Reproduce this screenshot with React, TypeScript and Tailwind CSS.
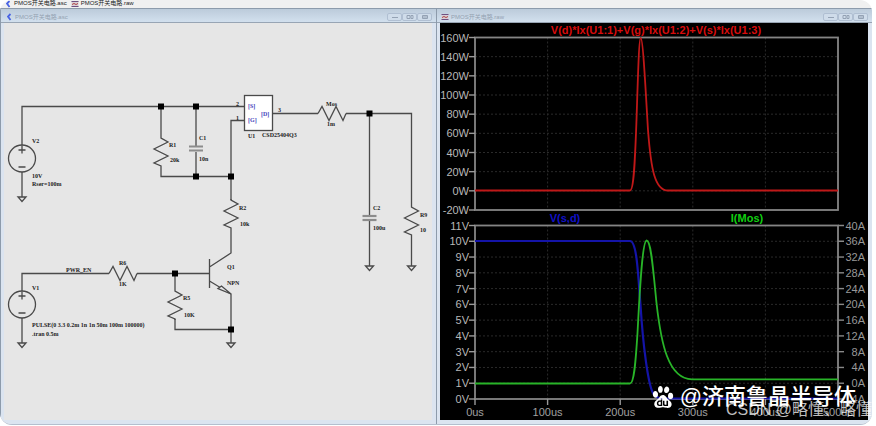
import type { ReactNode } from "react";
import { SiBaidu } from "react-icons/si";

const WIRE = "#4a4a4a";

interface PointProps {
  readonly x: number;
  readonly y: number;
}

function Label({ x, y, children }: PointProps & { readonly children: ReactNode }) {
  return (
    <text x={x} y={y} className="fill-[#222] font-['Liberation_Serif',serif] text-[6px] font-bold">
      {children}
    </text>
  );
}

function Junction({ x, y }: PointProps) {
  return <rect x={x - 3} y={y - 3} width={6} height={6} fill="#000" />;
}

function Ground({ x, y }: PointProps) {
  return <path d={`M${x - 4} ${y}h8l-4 4.5z`} />;
}

function VResistor({ x, y }: PointProps) {
  return <path d={`M${x} ${y}v1l7 4l-14 7l14 7l-14 7l7 3v1`} />;
}

function HResistor({ x, y }: PointProps) {
  return <path d={`M${x} ${y}l4 -7l7 14l7 -14l7 14l3 -7`} />;
}

function Capacitor({ x, y }: PointProps) {
  return (
    <g stroke="#8c8c8c" strokeWidth={2.2}>
      <path d={`M${x - 7} ${y}h14`} />
      <path d={`M${x - 7} ${y + 4}h14`} />
    </g>
  );
}

function Source({ x, y }: PointProps) {
  return (
    <g>
      <circle cx={x} cy={y} r={13.5} />
      <path d={`M${x} ${y - 13}v8M${x - 3.5} ${y - 8.5}h7M${x - 3.5} ${y + 8.5}h7`} />
    </g>
  );
}

function Schematic() {
  return (
    <svg viewBox="4 23 428 397" className="block h-auto w-full bg-[#e6e6e6]" role="img" aria-label="Schematic">
      <g fill="none" stroke={WIRE} strokeWidth={1.3}>
        {/* supply rail */}
        <path d="M22 145V106.5H244M22 172V197" />
        <Source x={22} y={158.5} />
        <Ground x={22} y={197} />
        <path d="M161 106.5V137M161 167V176.5H231M196 106.5V146M196 152V176.5" />
        <VResistor x={161} y={137} />
        <Capacitor x={196} y={146.5} />

        {/* mosfet and load */}
        <rect x={244.5} y={95.5} width={28} height={35} fill="#fff" />
        <path d="M244 120.5H231V200M272.5 113.5H318M346 113.5H411.5V206M411.5 236V266" />
        <HResistor x={318} y={113.5} />
        <path d="M369.5 113.5V216M369.5 221V266" />
        <Capacitor x={369.5} y={216} />
        <VResistor x={411.5} y={206} />
        <Ground x={369.5} y={266} />
        <Ground x={411.5} y={266} />

        {/* gate driver */}
        <VResistor x={231} y={199} />
        <path d="M231 229V253L209.500 267M209.500 259V288M209.500 281L231 294V343" />
        <path d="M218 288.500L221.500 286L231 294z" fill="#e6e6e6" />
        <Ground x={231} y={343} />
        <path d="M22 291V273.500H109M137 273.500H209.500M22 318V343" />
        <Source x={22} y={304.5} />
        <Ground x={22} y={343} />
        <HResistor x={109} y={273.5} />
        <path d="M175 273.500V290M175 319V329.500H231" />
        <VResistor x={175} y={290} />
      </g>

      <Junction x={161} y={106.5} />
      <Junction x={196} y={106.5} />
      <Junction x={196} y={176.5} />
      <Junction x={231} y={176.5} />
      <Junction x={369.5} y={113.5} />
      <Junction x={175} y={273.5} />
      <Junction x={231} y={329.5} />

      <Label x={32} y={143}>V2</Label>
      <Label x={32} y={178}>10V</Label>
      <Label x={32} y={186}>Rser=100m</Label>
      <Label x={169} y={147}>R1</Label>
      <Label x={170} y={162}>20k</Label>
      <Label x={199} y={140}>C1</Label>
      <Label x={199} y={161}>10n</Label>
      <Label x={236} y={106}>2</Label>
      <Label x={236} y={120}>1</Label>
      <Label x={278} y={112}>3</Label>
      <Label x={248} y={138}>U1</Label>
      <Label x={262} y={137}>CSD25404Q3</Label>
      <g className="fill-[#4444bb] font-['Liberation_Serif',serif] text-[6px] font-bold">
        <text x={248} y={108}>[S]</text>
        <text x={248} y={122}>[G]</text>
        <text x={261} y={116}>[D]</text>
      </g>
      <Label x={326} y={106}>Mos</Label>
      <Label x={327} y={126}>1m</Label>
      <Label x={373} y={210}>C2</Label>
      <Label x={373} y={230}>100u</Label>
      <Label x={420} y={217}>R9</Label>
      <Label x={420} y={232}>10</Label>
      <Label x={239} y={210}>R2</Label>
      <Label x={240} y={226}>10k</Label>
      <Label x={227} y={269}>Q1</Label>
      <Label x={227} y={285}>NPN</Label>
      <Label x={66} y={272}>PWR_EN</Label>
      <Label x={119} y={265}>R6</Label>
      <Label x={119} y={286}>1K</Label>
      <Label x={183} y={300}>R5</Label>
      <Label x={184} y={317}>10K</Label>
      <Label x={32} y={290}>V1</Label>
      <Label x={32} y={327}>PULSE(0 3.3 0.2m 1n 1n 50m 100m 100000)</Label>
      <Label x={32} y={336}>.tran 0.5m</Label>
    </svg>
  );
}

const LEFT = 475;
const RIGHT = 838;
const X_TICKS = ["0us", "100us", "200us", "300us", "400us", "500us"];
const POWER_TICKS = ["160W", "140W", "120W", "100W", "80W", "60W", "40W", "20W", "0W", "-20W"];
const VOLT_TICKS = ["11V", "10V", "9V", "8V", "7V", "6V", "5V", "4V", "3V", "2V", "1V", "0V"];
const AMP_TICKS = ["40A", "36A", "32A", "28A", "24A", "20A", "16A", "12A", "8A", "4A", "0A", "-4A"];

const tickX = (i: number) => LEFT + ((RIGHT - LEFT) * i) / (X_TICKS.length - 1);

interface PaneProps {
  readonly top: number;
  readonly bottom: number;
  readonly left: readonly string[];
  readonly right?: readonly string[];
  readonly children: ReactNode;
}

function Pane({ top, bottom, left, right, children }: PaneProps) {
  const tickY = (i: number) => top + ((bottom - top) * i) / (left.length - 1);

  return (
    <g>
      <g stroke="#2a2a2a" strokeWidth={1} strokeDasharray="2 2">
        {left.slice(1, -1).map((label, i) => (
          <path key={label} d={`M${LEFT} ${tickY(i + 1)}H${RIGHT}`} />
        ))}
        {X_TICKS.slice(1, -1).map((label, i) => (
          <path key={label} d={`M${tickX(i + 1)} ${top}V${bottom}`} />
        ))}
      </g>
      <rect x={LEFT} y={top} width={RIGHT - LEFT} height={bottom - top} fill="none" stroke="#858585" strokeWidth={1.8} />
      {left.map((label, i) => (
        <g key={label}>
          <path d={`M469 ${tickY(i)}H${LEFT}`} stroke="#999" strokeWidth={1.4} />
          <text x={469} y={tickY(i) + 4} textAnchor="end" className="fill-[#b8b8b8]">
            {label}
          </text>
        </g>
      ))}
      {right?.map((label, i) => (
        <g key={label}>
          <path d={`M${RIGHT} ${tickY(i)}h6`} stroke="#888" strokeWidth={1.4} />
          <text x={865} y={tickY(i) + 4} textAnchor="end" className="fill-[#989898]">
            {label}
          </text>
        </g>
      ))}
      {children}
    </g>
  );
}

function Waveforms() {
  return (
    <svg
      viewBox="440 23 428 397"
      className="block h-auto w-full bg-black font-['Liberation_Sans',sans-serif] text-[11px]"
      role="img"
      aria-label="Waveforms"
    >
      <text x={656} y={34} textAnchor="middle" className="fill-[#d80c0c] font-bold">
        V(d)*Ix(U1:1)+V(g)*Ix(U1:2)+V(s)*Ix(U1:3)
      </text>
      <Pane top={37.5} bottom={210} left={POWER_TICKS}>
        <path
          d="M475 190.500H630C634 190.500 635 160 636.500 120C638 75 639 38 640.700 38C643 38 645.500 88 648 130C651 170 655 190.500 668 190.500H838"
          fill="none"
          stroke="#c01818"
          strokeWidth={1.8}
        />
      </Pane>

      <text x={565} y={222} textAnchor="middle" className="fill-[#1010c8] font-bold">
        V(s,d)
      </text>
      <text x={747} y={222} textAnchor="middle" className="fill-[#10d010] font-bold">
        I(Mos)
      </text>
      <Pane top={225.5} bottom={399} left={VOLT_TICKS} right={AMP_TICKS}>
        <path
          d="M475 241H630C637 241 638 275 640.500 305C643 345 648 384 653 393C656 398.500 660 398.500 668 398.500H838"
          fill="none"
          stroke="#1414a8"
          strokeWidth={2.2}
        />
        <path
          d="M475 383.500H630C634 383.500 635.500 365 637.500 333C640 285 642.500 240.500 646.700 240.500C651 240.500 653 268 656.500 303C661 343 668 379 692 379.300H838"
          fill="none"
          stroke="#28b428"
          strokeWidth={1.8}
        />
      </Pane>
      {X_TICKS.map((label, i) => (
        <g key={label}>
          <path d={`M${tickX(i)} 399v6`} stroke="#999" strokeWidth={1.4} />
          <text x={tickX(i)} y={416} textAnchor="middle" className="fill-[#a0a0a0]">
            {label}
          </text>
        </g>
      ))}
    </svg>
  );
}

function SchematicIcon() {
  return (
    <svg viewBox="0 0 8 8" className="size-2 shrink-0" fill="none" aria-hidden>
      <path d="M5.500 1L3 3.500L5.500 7" stroke="#4a64e4" strokeWidth={1.8} />
    </svg>
  );
}

function WaveIcon() {
  return (
    <svg viewBox="0 0 8 8" className="size-2 shrink-0" aria-hidden>
      <rect x={0.5} y={1} width={7} height={6} fill="#d8d0d8" />
      <path d="M.5 1.500h7M.5 6.500h7" stroke="#705080" strokeWidth={1.2} />
      <path d="M1 4.500l2 -1l2 1l2 -1" fill="none" stroke="#b04040" />
    </svg>
  );
}

const CONTROLS = [
  { label: "Minimize", path: "M3 4.500h6" },
  { label: "Restore", path: "M3 2.500h3v3h-3zM7 2.500h2v3h-2z" },
  { label: "Close", path: "M3.500 2.500h5v3h-5zM3.500 4h5" },
];

interface WindowProps {
  readonly title: string;
  readonly icon: ReactNode;
  readonly children: ReactNode;
}

function Window({ title, icon, children }: WindowProps) {
  return (
    <section className="min-w-0 border-t border-l border-[#8d9bab] bg-[#dbe4f0] pr-1 pb-1 pl-[3px]">
      <header className="-mr-1 -ml-[3px] flex h-[14px] items-center gap-0.5 border-b border-[#98a5b4] bg-linear-to-b from-[#bccbda] to-[#d2e0ee] pt-0.5 pr-1 pl-1">
        {icon}
        <h2 className="min-w-0 flex-1 truncate text-[6px] leading-[10px] text-[#94a2b2]">{title}</h2>
        <div className="flex">
          {CONTROLS.map((control) => (
            <button
              key={control.label}
              type="button"
              aria-label={control.label}
              className="flex h-2 w-[15px] items-center justify-center rounded-xs border border-[#b0bfd2] bg-[#cfdcea]"
            >
              <svg viewBox="0 0 12 8" className="h-2 w-3" fill="none" stroke="#94a2b4" aria-hidden>
                <path d={control.path} />
              </svg>
            </button>
          ))}
        </div>
      </header>
      {children}
    </section>
  );
}

export default function App() {
  return (
    <div className="bg-white pr-1 font-['Liberation_Sans','Noto_Sans_CJK_SC',sans-serif]">
      <main className="relative overflow-hidden rounded-xl border-b border-[#b4bfce] bg-[#f0f0f0]">
        <nav className="flex h-2 items-start gap-1 overflow-hidden pl-1 text-[6px] leading-[6px] text-[#222]">
          <a href="#schematic" className="flex shrink-0 gap-0.5 whitespace-nowrap">
            <SchematicIcon />
            PMOS开关电路.asc
          </a>
          <a href="#waveforms" className="flex shrink-0 gap-0.5 whitespace-nowrap">
            <WaveIcon />
            PMOS开关电路.raw
          </a>
        </nav>
        <div className="grid grid-cols-2">
          <Window title="PMOS开关电路.asc" icon={<SchematicIcon />}>
            <Schematic />
          </Window>
          <Window title="PMOS开关电路.raw" icon={<WaveIcon />}>
            <Waveforms />
          </Window>
        </div>
        <p className="absolute right-4 bottom-3 flex items-center gap-1.5 text-[22px] leading-[30px] font-medium text-white">
          <SiBaidu className="size-[22px]" aria-hidden />
          @济南鲁晶半导体
        </p>
        <p className="absolute right-0 bottom-1 text-[16px] leading-[20px] text-white/75">CSDN @略懂、略懂</p>
      </main>
    </div>
  );
}
